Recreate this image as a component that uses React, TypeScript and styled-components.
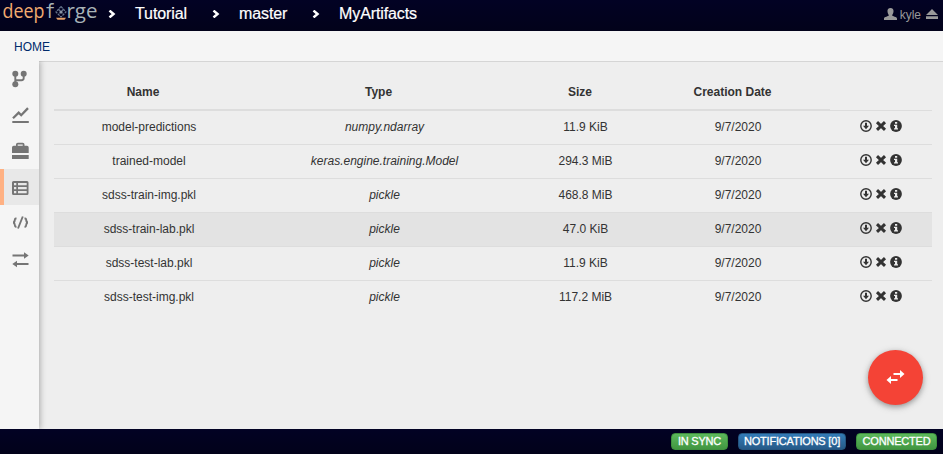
import React from "react";
import styled, { createGlobalStyle } from "styled-components";

const GlobalStyle = createGlobalStyle`
  * { box-sizing: border-box; }
  body { margin: 0; font-family: "Liberation Sans", Arial, sans-serif; font-size: 12px; color: #333; background: #eee; overflow: hidden; }
`;

const Page = styled.div`
  height: 454px;
  display: flex;
  flex-direction: column;
  position: relative;
`;
const Header = styled.header`
  height: 31px;
  flex: none;
  display: flex;
  align-items: flex-start;
  background: linear-gradient(#020224, #02021a);
`;
const Logo = styled.svg`
  width: 100px;
  height: 31px;
  flex: none;
  overflow: visible;
`;
const Crumb = styled.div<{ $w: number }>`
  width: ${(p) => p.$w}px;
  display: flex;
  align-items: center;
  height: 28px;
  color: #fff;
  font-size: 16px;
  letter-spacing: -0.1px;
  -webkit-text-stroke: 0.2px #fff;
  white-space: nowrap;
  svg { margin: 0 19px 0 8px; flex: none; }
`;
const User = styled.div`
  margin-left: auto;
  height: 29px;
  padding-right: 5px;
  display: flex;
  align-items: center;
  color: #999;
  font-size: 12px;
  svg { margin-top: -1px; }
  span { margin: 0 5px 0 3px; }
`;
const HomeBar = styled.nav`
  height: 30px;
  flex: none;
  padding: 9px 14px 0;
  background: #f5f5f5;
  color: #002b6b;
  line-height: 14px;
`;
const Body = styled.div`
  flex: 1;
  min-height: 0;
  display: flex;
`;
const Sidebar = styled.aside`
  width: 39px;
  flex: none;
  background: #f5f5f5;
  box-shadow: 1px 0 6px rgba(0, 0, 0, 0.3);
  clip-path: inset(0 -12px 0 0);
  z-index: 1;
`;
const SideItem = styled.div<{ $active?: boolean }>`
  height: 36px;
  padding-left: 8px;
  border-left: 4px solid ${(p) => (p.$active ? "#ffb183" : "transparent")};
  background: ${(p) => (p.$active ? "#e8e8e8" : "transparent")};
  background-clip: padding-box;
  svg { display: block; width: 17px; height: 36px; }
`;
const Main = styled.main`
  flex: 1;
  border-top: 1px solid #d5d5d5;
  background: #eee;
  padding-left: 15px;
`;
const Table = styled.div`
  width: 878px;
`;
const columns = "178px 293px 110px 195px 102px";
const HeadRow = styled.div`
  display: grid;
  grid-template-columns: ${columns};
  height: 49px;
`;
const HeadCell = styled.div<{ $blank?: boolean }>`
  border-bottom: ${(p) => (p.$blank ? "1px solid #ddd" : "2px solid #ddd")};
  padding-top: 22px;
  line-height: 17px;
  font-weight: bold;
  text-align: center;
`;
const Row = styled.div<{ $hover?: boolean }>`
  display: grid;
  grid-template-columns: ${columns};
  height: 34px;
  border-bottom: 1px solid #ddd;
  background: ${(p) => (p.$hover ? "#e3e3e3" : "transparent")};
  &:last-child { border-bottom: 0; }
`;
const Cell = styled.div<{ $italic?: boolean }>`
  padding: 8px 0 0 11px;
  line-height: 17px;
  text-align: center;
  font-style: ${(p) => (p.$italic ? "italic" : "normal")};
  &:first-child, &:nth-child(2) { padding-left: 12px; }
`;
const Actions = styled.div`
  display: flex;
  gap: 3px;
  padding: 9px 0 0 30px;
  svg { width: 12px; height: 12px; }
`;
const Fab = styled.button`
  position: absolute;
  left: 868px;
  top: 350px;
  width: 55px;
  height: 55px;
  border: 0;
  padding: 0;
  border-radius: 50%;
  background: #f44336;
  box-shadow: 0 2px 5px rgba(0, 0, 0, 0.26), 0 2px 8px rgba(0, 0, 0, 0.16);
  z-index: 2;
  svg { display: block; }
`;
const Footer = styled.footer`
  height: 25px;
  flex: none;
  background: linear-gradient(#020224, #02021a);
  display: flex;
  justify-content: flex-end;
  gap: 10px;
  padding: 4px 6px 0 0;
  z-index: 1;
`;
const Badge = styled.span<{ $blue?: boolean; $w: number }>`
  width: ${(p) => p.$w}px;
  height: 17px;
  border-radius: 4px;
  border: 1px solid ${(p) => (p.$blue ? "#245580" : "#3e8f3e")};
  background: ${(p) => (p.$blue ? "linear-gradient(#337ab7, #265a88)" : "linear-gradient(#5cb85c, #419641)")};
  color: #fff;
  font-size: 11px;
  letter-spacing: -0.2px;
  line-height: 15px;
  text-align: center;
  white-space: nowrap;
  -webkit-text-stroke: 0.3px #fff;
`;

const Chevron = () => (
  <svg width="8" height="8" viewBox="0 0 8 8">
    <path d="M1.500 .6 5.500 4 1.500 7.400" fill="none" stroke="#fff" strokeWidth="2.500" />
  </svg>
);
const Download = () => (
  <svg viewBox="0 0 12 12">
    <circle cx="6" cy="6" r="5.200" fill="none" stroke="#333" strokeWidth="1.400" />
    <path d="M5 2.800h2v3h2L6 9.200 3 5.800h2z" fill="#333" />
  </svg>
);
const Remove = () => (
  <svg viewBox="0 0 12 12">
    <path d="M2 2.200 10 9.800M10 2.200 2 9.800" stroke="#333" strokeWidth="3" />
  </svg>
);
const Info = () => (
  <svg viewBox="0 0 12 12">
    <circle cx="6" cy="6" r="5.900" fill="#333" />
    <path d="M5 2h2.200v1.700H5zM4 4.800h3.200v3.500H8v1.300H4V8.300h1V6H4z" fill="#eee" />
  </svg>
);

const sideIcons: React.ReactNode[] = [
  <g key="branch" fill="#757575">
    <circle cx="3.3" cy="12.7" r="3" />
    <circle cx="11.7" cy="12.7" r="3" />
    <circle cx="3.3" cy="23.3" r="3" />
    <path d="M3.3 13v10M11.7 13v4q0 2.2-2.2 2.2H3.3" fill="none" stroke="#757575" strokeWidth="1.9" />
  </g>,
  <g key="chart" fill="none" stroke="#757575">
    <path d="M1 21.300 6.700 15.700 9.200 18.200 16 11.100" strokeWidth="2.300" />
    <path d="M.3 25h16.500" strokeWidth="2" />
  </g>,
  <g key="toolbox" fill="#757575">
    <path d="M0 14.500q0-1.700 1.700-1.700H4V11.500q0-1.800 1.800-1.800h4.900q1.800 0 1.800 1.800v1.300H15q1.700 0 1.700 1.700V20H0zM5.700 12.800h5V11.400h-5zM0 22h16.700v4H0z" fillRule="evenodd" />
  </g>,
  <g key="list" transform="translate(0 1)">
    <path d="M1.500 11h13.500q1.500 0 1.500 1.500v11q0 1.500-1.500 1.500H1.500Q0 25 0 23.500v-11Q0 11 1.500 11zM2 13v2.300h2.300V13zM6 13v2.300h8.700V13zM2 17v2.300h2.300V17zM6 17v2.300h8.700V17zM2 21v2.300h2.300V21zM6 21v2.300h8.700V21z" fill="#757575" fillRule="evenodd" />
  </g>,
  <g key="code" fill="none" stroke="#757575" strokeWidth="1.900">
    <path d="M4.500 13.500H3.700Q3 13.500 2.800 15 2.500 17.500 1 17.500 2.500 17.500 2.800 20 3 21.700 3.700 21.700H4.500M12.500 13.500h.8q.7 0 .9 1.500.3 2.500 1.800 2.500-1.500 0-1.800 2.500-.2 1.700-.9 1.700h-.8M10.800 11.500 6 23.500" />
  </g>,
  <g key="transfer" fill="#757575">
    <path d="M.5 13.500H12V11.300l4.700 3.200-4.700 3.200v-2.200H.5zM16.500 22H5v-2.200L.3 23 5 26.200V24h11.500z" />
  </g>,
];

const rows = [
  ["model-predictions", "numpy.ndarray", "11.9 KiB"],
  ["trained-model", "keras.engine.training.Model", "294.3 MiB"],
  ["sdss-train-img.pkl", "pickle", "468.8 MiB"],
  ["sdss-train-lab.pkl", "pickle", "47.0 KiB"],
  ["sdss-test-lab.pkl", "pickle", "11.9 KiB"],
  ["sdss-test-img.pkl", "pickle", "117.2 MiB"],
];

export default function App() {
  return (
    <Page>
      <GlobalStyle />
      <Header>
        <Logo viewBox="0 0 100 31" fontFamily="'Open Sans', 'Noto Sans', sans-serif" fontWeight="400">
          <text x="2.500" y="18" fontSize="20" fill="#f2ab70" textLength="42" lengthAdjust="spacingAndGlyphs">deep</text>
          <text x="44.700" y="18" fontSize="19" fill="#a9b4b7" textLength="10.500" lengthAdjust="spacingAndGlyphs" fontFamily="'DejaVu Sans Mono', monospace">f</text>
          <text x="66.500" y="18" fontSize="20" fill="#a9b4b7" textLength="31" lengthAdjust="spacingAndGlyphs">rge</text>
          <path d="M61 6.500 66 12 61 17 56 12zM58.500 9.200l5 5.300M63.500 9.200l-5 5.300" fill="none" stroke="#66758c" strokeWidth="1.200" strokeDasharray="2.500 .8" />
          <circle cx="61" cy="12" r="1.500" fill="#8996a6" />
          <path d="M56 17.800h10l-1.500 2H57.500z" fill="#e7a166" />
        </Logo>
        <Crumb $w={104}><Chevron />Tutorial</Crumb>
        <Crumb $w={100}><Chevron />master</Crumb>
        <Crumb $w={130}><Chevron />MyArtifacts</Crumb>
        <User>
          <svg width="13" height="12" viewBox="0 0 13 12"><path d="M6.500 0C8.700 0 9.700 1.500 9.500 3.500 9.400 5.500 8.500 6 8.200 7.200 8.200 8.500 13 8.500 13 10.500V12H0v-1.500C0 8.500 4.800 8.500 4.800 7.200 4.500 6 3.600 5.500 3.500 3.500 3.300 1.500 4.300 0 6.500 0z" fill="#999" /></svg>
          <span>kyle</span>
          <svg width="12" height="10" viewBox="0 0 12 10"><path d="M6 0 12 6H0zM0 7.300h12V10H0z" fill="#999" /></svg>
        </User>
      </Header>
      <HomeBar>HOME</HomeBar>
      <Body>
        <Sidebar>
          {sideIcons.map((icon, i) => (
            <SideItem key={i} $active={i === 3}>
              <svg viewBox="0 0 17 36">{icon}</svg>
            </SideItem>
          ))}
        </Sidebar>
        <Main>
          <Table>
            <HeadRow>
              <HeadCell>Name</HeadCell>
              <HeadCell>Type</HeadCell>
              <HeadCell>Size</HeadCell>
              <HeadCell>Creation Date</HeadCell>
              <HeadCell $blank />
            </HeadRow>
            {rows.map(([name, type, size], i) => (
              <Row key={name} $hover={i === 3}>
                <Cell>{name}</Cell>
                <Cell $italic>{type}</Cell>
                <Cell>{size}</Cell>
                <Cell>9/7/2020</Cell>
                <Actions><Download /><Remove /><Info /></Actions>
              </Row>
            ))}
          </Table>
        </Main>
      </Body>
      <Fab aria-label="Transfer">
        <svg width="55" height="55" viewBox="0 0 55 55">
          <path d="M25.500 23H32v-3l4.500 4-4.500 4v-3h-6.500zM29.500 29H23v-3l-4.500 4 4.500 4v-3h6.500z" fill="#fff" />
        </svg>
      </Fab>
      <Footer>
        <Badge $w={57}>IN SYNC</Badge>
        <Badge $w={108} $blue>NOTIFICATIONS [0]</Badge>
        <Badge $w={81}>CONNECTED</Badge>
      </Footer>
    </Page>
  );
}
